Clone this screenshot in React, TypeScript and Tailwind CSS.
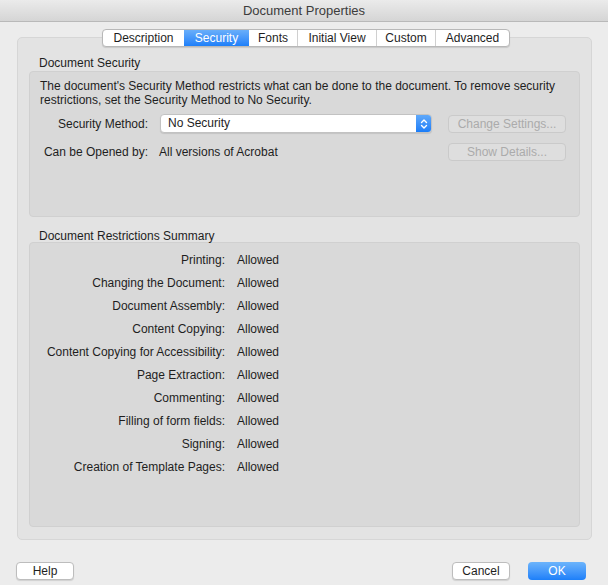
import React from 'react';

const TABS = ['Description', 'Security', 'Fonts', 'Initial View', 'Custom', 'Advanced'];
const TAB_WIDTHS = ['w-[81px]', 'w-[65px]', 'w-[48px]', 'w-[79px]', 'w-[59px]', 'w-[74px]'];

const RESTRICTIONS = [
  'Printing:',
  'Changing the Document:',
  'Document Assembly:',
  'Content Copying:',
  'Content Copying for Accessibility:',
  'Page Extraction:',
  'Commenting:',
  'Filling of form fields:',
  'Signing:',
  'Creation of Template Pages:',
];

const Stepper = () => (
  <svg width="8" height="12" viewBox="0 0 8 12" fill="none" stroke="white" strokeWidth="1.4" strokeLinecap="round" strokeLinejoin="round">
    <path d="M1.5 4.5 L4 2 L6.5 4.5" />
    <path d="M1.5 7.5 L4 10 L6.5 7.5" />
  </svg>
);

export default function App() {
  return (
    <div
      className="w-[608px] h-[585px] bg-[#ececec] text-[12px] text-[#1e1e1e] flex flex-col overflow-hidden"
      style={{ fontFamily: '"Liberation Sans", Arial, sans-serif' }}
    >
      {/* title bar */}
      <div className="h-[22px] shrink-0 flex items-center justify-center bg-gradient-to-b from-[#ebebeb] to-[#d5d5d5] border-b border-[#b9b9b9] text-[13px] text-[#3c3c3c]">
        Document Properties
      </div>

      {/* tab view */}
      <div className="relative ml-[17px] mr-[16px] mt-[15px] h-[503px] rounded-[5px] bg-[#e3e3e3] border border-[#d6d6d6]">
        <div className="absolute -top-[9px] left-[84px] flex h-[18px] rounded-[4px] bg-white border border-[#b8b8b8] shadow-[0_1px_1px_rgba(0,0,0,0.12)] overflow-hidden">
          {TABS.map((t, i) => (
            <div
              key={t}
              className={`${TAB_WIDTHS[i]} flex items-center justify-center leading-none ${
                i === 1
                  ? 'bg-gradient-to-b from-[#68aefa] to-[#1c7ff9] text-white'
                  : i > 0 && i !== 2
                  ? 'border-l border-[#d0d0d0]'
                  : ''
              }`}
            >
              {t}
            </div>
          ))}
        </div>

        <div className="pl-[11px] pr-[11px] pt-[17px]">
          <div className="pl-[10px] h-[16px] leading-[16px]">Document Security</div>
          <div className="h-[146px] rounded-[4px] bg-[#d9d9d9] border border-[#d0d0d0] px-[10px] pt-[7px]">
            <p className="leading-[14px]">
              The document's Security Method restricts what can be done to the document. To remove security restrictions, set the Security Method to No Security.
            </p>
            <div className="mt-[7px] flex items-center">
              <div className="w-[108px] text-right whitespace-nowrap">Security Method:</div>
              <div className="ml-[12px] w-[272px] h-[19px] flex rounded-[4px] bg-white border border-[#c2c2c2] shadow-[0_1px_1px_rgba(0,0,0,0.1)] overflow-hidden">
                <div className="flex-1 pl-[7px] leading-[17px]">No Security</div>
                <div className="w-[15px] flex items-center justify-center bg-gradient-to-b from-[#5ea8fa] to-[#1a7df8]">
                  <Stepper />
                </div>
              </div>
              <div className="ml-[16px] w-[118px] h-[18px] rounded-[4px] bg-[#dedede] border border-[#cacaca] text-[#ababab] flex items-center justify-center">
                Change Settings...
              </div>
            </div>
            <div className="mt-[10px] flex items-center">
              <div className="w-[108px] text-right whitespace-nowrap">Can be Opened by:</div>
              <div className="ml-[11px] w-[273px]">All versions of Acrobat</div>
              <div className="ml-[16px] w-[118px] h-[18px] rounded-[4px] bg-[#dedede] border border-[#cacaca] text-[#ababab] flex items-center justify-center">
                Show Details...
              </div>
            </div>
          </div>

          <div className="mt-[11px] pl-[10px] h-[16px] leading-[16px]">Document Restrictions Summary</div>
          <div className="-mt-[2px] h-[285px] rounded-[4px] bg-[#d9d9d9] border border-[#d0d0d0] pt-[9px] flex flex-col gap-[7px]">
            {RESTRICTIONS.map((r) => (
              <div key={r} className="flex h-[16px] items-center">
                <div className="w-[195px] text-right whitespace-nowrap">{r}</div>
                <div className="ml-[12px]">Allowed</div>
              </div>
            ))}
          </div>
        </div>
      </div>

      {/* footer */}
      <div className="mt-[22px] mx-[16px] flex items-center">
        <div className="w-[58px] h-[18px] rounded-[4px] bg-white border border-[#bdbdbd] shadow-[0_1px_1px_rgba(0,0,0,0.12)] flex items-center justify-center">
          Help
        </div>
        <div className="ml-auto w-[58px] h-[18px] rounded-[4px] bg-white border border-[#bdbdbd] shadow-[0_1px_1px_rgba(0,0,0,0.12)] flex items-center justify-center">
          Cancel
        </div>
        <div className="ml-[18px] mr-[6px] w-[58px] h-[18px] rounded-[4px] bg-gradient-to-b from-[#6cb4fb] to-[#1b7ff9] text-white flex items-center justify-center">
          OK
        </div>
      </div>
    </div>
  );
}
